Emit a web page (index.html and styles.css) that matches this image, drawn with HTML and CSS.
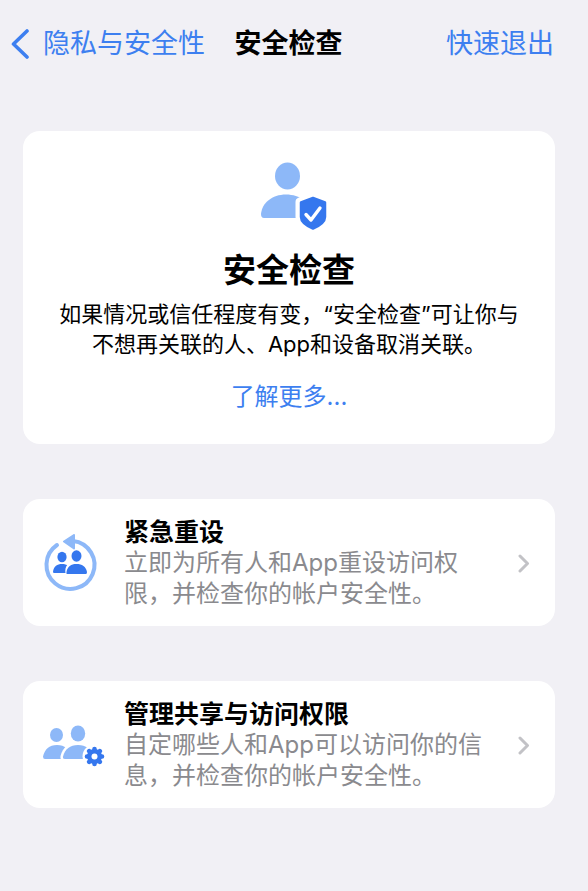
FILE: index.html
```
<!DOCTYPE html>
<html lang="zh-CN">
    <head>
        <meta charset="utf-8">
        <meta name="viewport" content="width=device-width, initial-scale=1.0">
        <title>安全检查</title>
        <link rel="stylesheet" href="styles.css">
    </head>
    <body>
        <header class="navbar">
            <a class="back" href="#">
                <svg width="20" height="30" viewBox="0 0 20 30" aria-hidden="true">
                    <path d="M16 2 L2.500 15 L16 28" fill="none" stroke="#3d7ff0" stroke-width="3.600" stroke-linecap="round" stroke-linejoin="round"/>
                </svg>
                <span>隐私与安全性</span>
            </a>
            <h1 class="navbar-title">安全检查</h1>
            <a class="exit" href="#">快速退出</a>
        </header>
        <main class="content">
            <section class="card intro">
                <svg class="intro-icon" width="68" height="70" viewBox="0 0 68 70" aria-hidden="true">
                    <ellipse cx="27.500" cy="15" rx="12.500" ry="13.500" fill="#8db8f8"/>
                    <path d="M4 57 Q1 57 1 53 C2 42 12 33.500 26 33.500 C40 33.500 51 42 52 53 Q52 57 49 57 Z" fill="#8db8f8"/>
                    <path d="M53 36 L66 41 V56 Q66 63 53 68.500 Q40 63 40 56 V41 Z" fill="#fff" stroke="#fff" stroke-width="9" stroke-linejoin="round"/>
                    <path d="M53 37 L65 41.500 V56 Q65 62.500 53 67.500 Q41 62.500 41 56 V41.500 Z" fill="#3577ee" stroke="#3577ee" stroke-width="2.500" stroke-linejoin="round"/>
                    <path d="M46 53.500 L51 59 L60 47" fill="none" stroke="#fff" stroke-width="3.400" stroke-linecap="round" stroke-linejoin="round"/>
                </svg>
                <h2 class="intro-title">安全检查</h2>
                <p class="intro-text">如果情况或信任程度有变，“安全检查”可让你与<br>不想再关联的人、App和设备取消关联。</p>
                <a class="more" href="#">了解更多...</a>
            </section>
            <a class="card row" href="#">
                <svg class="row-icon" width="64" height="60" viewBox="0 4 64 60" aria-hidden="true">
                    <path d="M31 11 A24 24 0 1 1 15 15" fill="none" stroke="#8db8f8" stroke-width="4" stroke-linecap="round"/>
                    <path d="M22 11.500 L32 5 V18.500 Z" fill="#8db8f8" stroke="#8db8f8" stroke-width="2" stroke-linejoin="round"/>
                    <ellipse cx="20" cy="27" rx="4.600" ry="5.200" fill="#3577ee"/>
                    <path d="M12 43 Q11 43 11 41.500 C12 36 15 34 20 34 C25 34 28 36 29 43 Z" fill="#3577ee"/>
                    <path d="M25 43 C24 37 27 33 34 33 C41 33 44 37 45 43 Z" fill="#3577ee" stroke="#fff" stroke-width="3"/>
                    <ellipse cx="34.500" cy="26" rx="5" ry="5.700" fill="#3577ee"/>
                    <path d="M25 44 Q24 44 24.500 42 C25.500 36.500 29 34 34.500 34 C40 34 44 36.500 45 42 Q45 44 44 44 Z" fill="#3577ee"/>
                </svg>
                <div class="row-body">
                    <h3 class="row-title">紧急重设</h3>
                    <p class="row-text">立即为所有人和App重设访问权<br>限，并检查你的帐户安全性。</p>
                </div>
                <svg class="chevron" width="14" height="20" viewBox="0 0 14 20" aria-hidden="true">
                    <path d="M3 2 L10.500 9.500 L3 17" fill="none" stroke="#c2c2c6" stroke-width="3" stroke-linecap="round" stroke-linejoin="round"/>
                </svg>
            </a>
            <a class="card row" href="#">
                <svg class="row-icon" width="64" height="60" viewBox="0 3 64 60" aria-hidden="true">
                    <g fill="#8db8f8">
                        <ellipse cx="14.500" cy="22" rx="6.500" ry="7"/>
                        <path d="M3 46 Q1 46 1 43.500 C3 36 7 32 15 32 C23 32 27 36 28 46 Z"/>
                        <path d="M23 47.500 Q17.500 47.500 18.500 43 C21 34 26 30 36 30 C46 30 50 36 51 47.500 Z" fill="#fff"/>
                        <ellipse cx="36" cy="20.500" rx="7.200" ry="8"/>
                        <path d="M23 46 Q20.500 46 21 43.500 C23 36 28 32 36 32 C44 32 49 36 51 43.500 Q51 46 49 46 Z"/>
                    </g>
                    <circle cx="52.500" cy="43.500" r="12" fill="#fff"/>
                    <g stroke="#3577ee" stroke-width="4.600" stroke-linecap="round">
                        <path d="M52.500 36 V51 M45 43.500 H60 M47.200 38.200 L57.800 48.800 M57.800 38.200 L47.200 48.800"/>
                    </g>
                    <circle cx="52.500" cy="43.500" r="7.500" fill="#3577ee"/>
                    <circle cx="52.500" cy="43.500" r="3" fill="#fff"/>
                </svg>
                <div class="row-body">
                    <h3 class="row-title">管理共享与访问权限</h3>
                    <p class="row-text">自定哪些人和App可以访问你的信<br>息，并检查你的帐户安全性。</p>
                </div>
                <svg class="chevron" width="14" height="20" viewBox="0 0 14 20" aria-hidden="true">
                    <path d="M3 2 L10.500 9.500 L3 17" fill="none" stroke="#c2c2c6" stroke-width="3" stroke-linecap="round" stroke-linejoin="round"/>
                </svg>
            </a>
        </main>
    </body>
</html>
```
FILE: styles.css
```
* {
    box-sizing: border-box;
}
body {
    margin: 0;
    background: #f1f0f5;
    color: #000;
    font-family: Inter, "Noto Sans CJK SC", sans-serif;
}
h1, h2, h3, p {
    margin: 0;
}
a {
    color: #3d7ff0;
    text-decoration: none;
}
.navbar {
    display: grid;
    grid-template-columns: 1fr auto 1fr;
    align-items: center;
    height: 86px;
    padding: 2px 34px 0 23px;
    font-size: 27px;
    line-height: 40px;
    white-space: nowrap;
}
.back {
    display: flex;
    align-items: center;
    gap: 12px;
    margin-left: -12px;
}
.navbar-title {
    font-size: 27px;
    font-weight: 700;
}
.exit {
    text-align: right;
}
.content {
    display: flex;
    flex-direction: column;
    gap: 55px;
    padding: 45px 33px 45px 23px;
}
.card {
    background: #fff;
    border-radius: 17px;
}
.intro {
    display: flex;
    flex-direction: column;
    align-items: center;
    padding: 30px 20px 32px;
    text-align: center;
}
.intro-icon {
    margin-left: 10px;
}
.intro-title {
    margin-top: 15px;
    font-size: 33px;
    line-height: 48px;
}
.intro-text {
    margin-top: 5px;
    font-size: 22px;
    line-height: 30px;
}
.more {
    margin-top: 22px;
    font-size: 24px;
    line-height: 31px;
}
.row {
    display: flex;
    align-items: center;
    padding: 19px 24px 17px 19px;
}
.row-icon, .chevron {
    flex: none;
}
.row-body {
    flex: 1;
    margin-left: 18px;
}
.row-title {
    color: #000;
    font-size: 25px;
    line-height: 29px;
}
.row-text {
    color: #8a8a8e;
    font-size: 24px;
    line-height: 31px;
}
```
